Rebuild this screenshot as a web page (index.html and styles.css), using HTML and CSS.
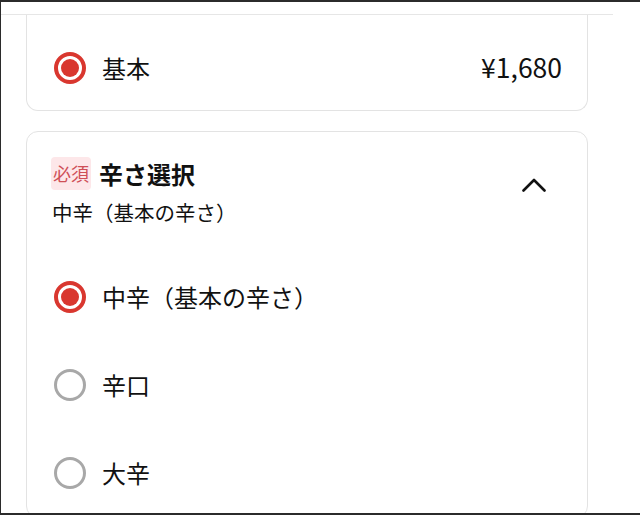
FILE: index.html
```html
<!DOCTYPE html>
<html lang="ja">
<head>
<meta charset="utf-8">
<link rel="stylesheet" href="styles.css">
</head>
<body>
<div class="frame">
  <div class="page">
    <div class="topbar"></div>
    <div class="content">
      <div class="card card-base">
        <div class="option-row">
          <span class="radio checked"></span>
          <span class="label">基本</span>
          <span class="price">¥1,680</span>
        </div>
      </div>
      <div class="card card-spice">
        <div class="section-head">
          <div class="head-text">
            <div class="title-row">
              <span class="badge">必須</span>
              <span class="title">辛さ選択</span>
            </div>
            <div class="subtitle">中辛（基本の辛さ）</div>
          </div>
          <svg class="chevron" width="24" height="14" viewBox="0 0 24 14">
            <path d="M1.5 12.5 L12 2 L22.5 12.5" fill="none" stroke="#111" stroke-width="2.6" stroke-linecap="round" stroke-linejoin="round"/>
          </svg>
        </div>
        <div class="options">
          <div class="option-item"><span class="radio checked"></span><span class="label">中辛（基本の辛さ）</span></div>
          <div class="option-item"><span class="radio"></span><span class="label">辛口</span></div>
          <div class="option-item"><span class="radio"></span><span class="label">大辛</span></div>
        </div>
      </div>
    </div>
  </div>
</div>
</body>
</html>
```
FILE: styles.css
```css
* { box-sizing: border-box; }
html, body { margin: 0; padding: 0; background: #fff; }
body {
  font-family: "Noto Sans CJK JP", "Noto Sans", sans-serif;
  color: #111;
}
.frame {
  width: 640px;
  height: 515px;
  border-top: 2px solid #2b2b2b;
  border-left: 1px solid #2b2b2b;
  border-bottom: 2px solid #2b2b2b;
  overflow: hidden;
  display: flex;
}
.page {
  width: 612px;
  flex: none;
}
.topbar {
  height: 13px;
  border-bottom: 1px solid #e6e6e6;
}
.content {
  padding: 0 25px;
}
.card {
  border: 1px solid #e3e3e3;
  border-radius: 12px;
  background: #fff;
}
.card-base {
  border-top: none;
  border-radius: 0 0 12px 12px;
  padding: 37px 25px 26px 27px;
}
.option-row {
  display: flex;
  align-items: center;
  height: 32px;
}
.radio {
  width: 32px;
  height: 32px;
  border-radius: 50%;
  border: 3px solid #a8a8a8;
  flex: none;
  display: inline-block;
  position: relative;
}
.radio.checked {
  border: 4px solid #d9372f;
}
.radio.checked::after {
  content: "";
  position: absolute;
  left: 3px;
  top: 3px;
  width: 18px;
  height: 18px;
  border-radius: 50%;
  background: #d9372f;
}
.label {
  font-size: 24px;
  line-height: 32px;
  margin-left: 16px;
}
.price {
  margin-left: auto;
  font-size: 26.5px;
  line-height: 32px;
  margin-top: -2px;
}
.card-spice {
  margin-top: 20px;
  padding: 25px 25px 0 24px;
}
.section-head {
  display: flex;
  align-items: flex-start;
}
.head-text {
  flex: 1;
}
.title-row {
  display: flex;
  align-items: center;
  height: 33px;
}
.badge {
  background: #fde7e9;
  color: #cf4f57;
  font-size: 18px;
  line-height: 33px;
  height: 33px;
  padding: 0 2px;
  border-radius: 4px;
}
.title {
  font-size: 24px;
  font-weight: 700;
  margin-left: 8px;
  line-height: 33px;
}
.subtitle {
  font-size: 20.5px;
  line-height: 28px;
  margin-top: 8px;
  margin-left: 1px;
}
.chevron {
  margin-top: 21px;
  margin-right: 16px;
  flex: none;
}
.options {
  margin-top: 27px;
  padding-left: 3px;
}
.option-item {
  display: flex;
  align-items: center;
  height: 88px;
}
```
